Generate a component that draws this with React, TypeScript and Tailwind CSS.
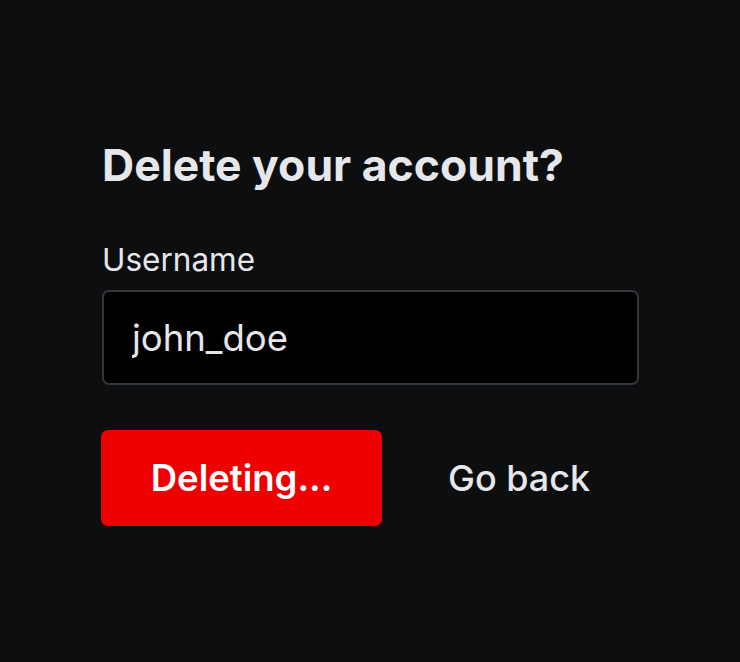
export default function App() {
  return (
    <div
      className="min-h-[662px] w-full bg-[#0d0e10] px-[102px] pt-[135px]"
      style={{ fontFamily: 'Inter, "Noto Sans", sans-serif' }}
    >
      <h1 className="text-[44.5px] leading-[60px] font-bold text-[#e5e7eb]">
        Delete your account?
      </h1>
      <label
        htmlFor="username"
        className="mt-[45px] block text-[31.5px] leading-[40px] text-[#e5e7eb]"
      >
        Username
      </label>
      <input
        id="username"
        type="text"
        defaultValue="john_doe"
        className="mt-[10px] block h-[95px] w-[537px] rounded-[7px] border-2 border-[#33363b] bg-black px-[28px] text-[36.5px] text-[#e5e7eb] outline-none"
      />
      <div className="mt-[45px] flex items-center">
        <button className="-ml-px h-[96px] w-[281px] rounded-[7px] bg-[#ee0000] text-[36.5px] font-semibold text-white">
          Deleting...
        </button>
        <button className="ml-[66px] text-[36px] font-medium text-[#e5e7eb]">
          Go back
        </button>
      </div>
    </div>
  )
}
